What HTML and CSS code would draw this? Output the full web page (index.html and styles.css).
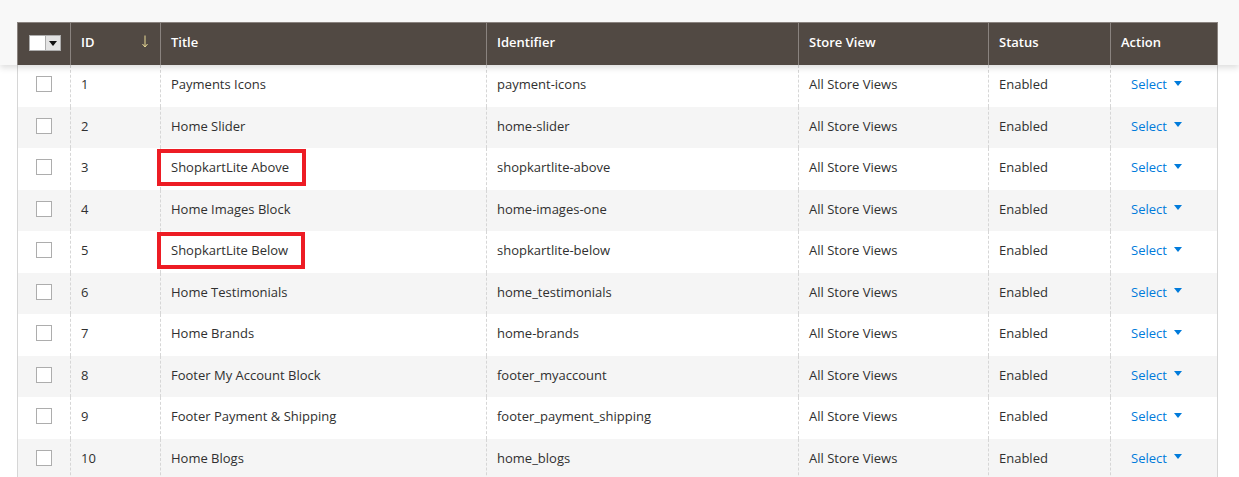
FILE: index.html
```html
<!DOCTYPE html>
<html lang="en">
<head>
<meta charset="utf-8">
<title>Blocks</title>
<link rel="stylesheet" href="styles.css">
</head>
<body>
<div class="band">
  <div class="grid head">
    <div class="th th-check">
      <span class="mass"><span class="mass-box"></span><span class="mass-drop"><span class="tri-dark"></span></span></span>
    </div>
    <div class="th th-id"><span>ID</span>
      <svg class="sort" width="8" height="13" viewBox="0 0 8 13"><path d="M4 0.5V11.5M1.5 9L4 12L6.5 9" fill="none" stroke="#eadb96" stroke-width="1"/></svg>
    </div>
    <div class="th">Title</div>
    <div class="th">Identifier</div>
    <div class="th">Store View</div>
    <div class="th">Status</div>
    <div class="th th-last">Action</div>
  </div>
</div>
<div class="grid body">
  <div class="td td-check"><span class="cb"></span></div><div class="td">1</div><div class="td">Payments Icons</div><div class="td">payment-icons</div><div class="td">All Store Views</div><div class="td">Enabled</div><div class="td td-act"><a class="sel">Select</a></div>
  <div class="td td-check alt"><span class="cb"></span></div><div class="td alt">2</div><div class="td alt">Home Slider</div><div class="td alt">home-slider</div><div class="td alt">All Store Views</div><div class="td alt">Enabled</div><div class="td td-act alt"><a class="sel">Select</a></div>
  <div class="td td-check"><span class="cb"></span></div><div class="td">3</div><div class="td"><span class="flag">ShopkartLite Above</span></div><div class="td">shopkartlite-above</div><div class="td">All Store Views</div><div class="td">Enabled</div><div class="td td-act"><a class="sel">Select</a></div>
  <div class="td td-check alt"><span class="cb"></span></div><div class="td alt">4</div><div class="td alt">Home Images Block</div><div class="td alt">home-images-one</div><div class="td alt">All Store Views</div><div class="td alt">Enabled</div><div class="td td-act alt"><a class="sel">Select</a></div>
  <div class="td td-check"><span class="cb"></span></div><div class="td">5</div><div class="td"><span class="flag">ShopkartLite Below</span></div><div class="td">shopkartlite-below</div><div class="td">All Store Views</div><div class="td">Enabled</div><div class="td td-act"><a class="sel">Select</a></div>
  <div class="td td-check alt"><span class="cb"></span></div><div class="td alt">6</div><div class="td alt">Home Testimonials</div><div class="td alt">home_testimonials</div><div class="td alt">All Store Views</div><div class="td alt">Enabled</div><div class="td td-act alt"><a class="sel">Select</a></div>
  <div class="td td-check"><span class="cb"></span></div><div class="td">7</div><div class="td">Home Brands</div><div class="td">home-brands</div><div class="td">All Store Views</div><div class="td">Enabled</div><div class="td td-act"><a class="sel">Select</a></div>
  <div class="td td-check alt"><span class="cb"></span></div><div class="td alt">8</div><div class="td alt">Footer My Account Block</div><div class="td alt">footer_myaccount</div><div class="td alt">All Store Views</div><div class="td alt">Enabled</div><div class="td td-act alt"><a class="sel">Select</a></div>
  <div class="td td-check"><span class="cb"></span></div><div class="td">9</div><div class="td">Footer Payment &amp; Shipping</div><div class="td">footer_payment_shipping</div><div class="td">All Store Views</div><div class="td">Enabled</div><div class="td td-act"><a class="sel">Select</a></div>
  <div class="td td-check alt"><span class="cb"></span></div><div class="td alt">10</div><div class="td alt">Home Blogs</div><div class="td alt">home_blogs</div><div class="td alt">All Store Views</div><div class="td alt">Enabled</div><div class="td td-act alt"><a class="sel">Select</a></div>
</div>
</body>
</html>
```

FILE: styles.css
```css
html, body {
  margin: 0;
  padding: 0;
  background: #ffffff;
  font-family: "Open Sans", "Noto Sans", sans-serif;
  font-size: 13px;
  line-height: 18px;
  color: #303030;
  overflow: hidden;
}

.grid {
  display: grid;
  grid-template-columns: 53px 90px 326px 312px 190px 122px 108px;
  width: 1201px;
}

.band {
  position: relative;
  z-index: 2;
  background: #f8f8f8;
  padding: 22px 0 0 17px;
  box-shadow: 0 3px 6px rgba(0, 0, 0, 0.13);
}

.head {
  border-top: 1px solid #8a837f;
}

.th {
  box-sizing: border-box;
  height: 42px;
  background: #514943;
  color: #ffffff;
  font-weight: 600;
  border-left: 1px solid #8a837f;
  padding: 10px 10px 0;
  display: flex;
  align-items: flex-start;
}

.th-last {
  border-right: 1px solid #8a837f;
}

.th-check {
  padding: 12px 0 0 11px;
}

.th-id {
  justify-content: space-between;
  padding-right: 10px;
}

.sort {
  display: block;
  margin-right: 1px;
  margin-top: 2px;
}

.mass {
  display: flex;
  height: 16px;
}

.mass-box {
  box-sizing: border-box;
  width: 16px;
  height: 16px;
  background: #ffffff;
  border: 1px solid #adadad;
  border-right: none;
}

.mass-drop {
  box-sizing: border-box;
  width: 16px;
  height: 16px;
  background: #e3e3e3;
  border: 1px solid #adadad;
  display: flex;
  align-items: center;
  justify-content: center;
}

.tri-dark {
  width: 0;
  height: 0;
  border-left: 4px solid transparent;
  border-right: 4px solid transparent;
  border-top: 5px solid #111111;
  margin-top: 1px;
}

.body {
  margin-left: 17px;
}

.td {
  box-sizing: border-box;
  height: 41.5px;
  padding: 10px 10px 0;
  border-left: 1px dashed #d6d6d6;
  background: #ffffff;
  white-space: nowrap;
}

.td.alt {
  background: #f5f5f5;
}

.td-check {
  border-left: 1px solid #d6d6d6;
  padding: 11px 0 0 18px;
}

.td-act {
  border-right: 1px solid #d6d6d6;
  padding-left: 20px;
}

.cb {
  display: block;
  box-sizing: border-box;
  width: 16px;
  height: 16px;
  background: #ffffff;
  border: 1px solid #adadad;
}

.sel {
  color: #007bdb;
  text-decoration: none;
  display: inline-flex;
  align-items: center;
}

.sel::after {
  content: "";
  width: 0;
  height: 0;
  border-left: 4px solid transparent;
  border-right: 4px solid transparent;
  border-top: 5px solid #007bdb;
  margin-left: 7px;
  margin-top: -2px;
}

.flag {
  position: relative;
  display: inline-block;
}

.flag::after {
  content: "";
  position: absolute;
  top: -9px;
  bottom: -10px;
  left: -14px;
  right: -17px;
  border: 4px solid #ed1c24;
}
```
